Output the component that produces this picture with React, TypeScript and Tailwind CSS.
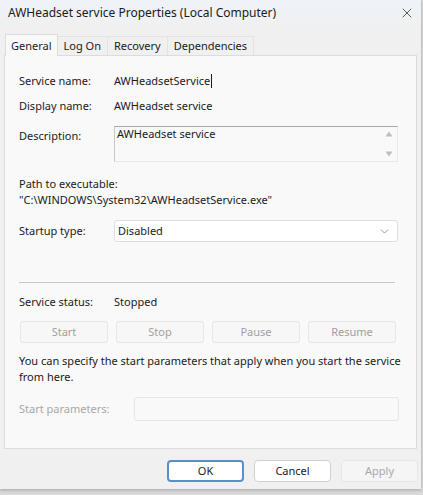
import React from 'react';
import { X, ChevronDown } from 'lucide-react';

const font = { fontFamily: '"Noto Sans", "Open Sans", sans-serif' };

function Label({ children }: { children: React.ReactNode }) {
  return <div className="w-[95px] shrink-0 text-[#1a1a1a]">{children}</div>;
}

function SvcButton({ label }: { label: string }) {
  return (
    <div className="flex h-[22px] w-[88px] items-center justify-center rounded-[3px] border border-[#e6e6e6] bg-[#f7f7f7] text-[#a0a0a0]">
      {label}
    </div>
  );
}

export default function App() {
  const tabs = ['Log On', 'Recovery', 'Dependencies'];

  return (
    <div className="h-[495px] w-[423px] bg-[#d9d9d9] text-[11px] leading-[14px] text-[#1a1a1a]" style={font}>
      <div className="flex h-[489px] w-[421px] flex-col bg-[#f0f0f0] shadow-[0_1px_3px_rgba(0,0,0,0.25)]">
        {/* title bar */}
        <div className="flex h-[25px] items-center justify-between bg-gradient-to-b from-[#eef3f9] to-[#f0f0f0] pl-2 pr-[6px]">
          <span className="text-[12px] text-[#1a1a1a]">AWHeadset service Properties (Local Computer)</span>
          <X size={16} strokeWidth={1.2} className="text-[#333]" />
        </div>

        {/* tabs */}
        <div className="mt-[9px] flex items-end pl-[5px]">
          <div className="relative z-10 -mb-px flex h-[22px] items-center border border-b-0 border-[#dcdcdc] bg-[#f9f9f9] px-[5px]">
            General
          </div>
          {tabs.map((t) => (
            <div key={t} className="flex h-[19px] items-center border-r border-t border-[#e3e3e3] bg-[#f0f0f0] px-[6px]">
              {t}
            </div>
          ))}
        </div>

        {/* panel */}
        <div className="mx-[4px] flex h-[394px] flex-col border border-[#dcdcdc] bg-[#f9f9f9] px-[14px]">
          <div className="mt-[18px] flex h-[14px] items-center">
            <Label>Service name:</Label>
            <span>AWHeadsetService</span>
            <span className="ml-px h-[14px] w-px bg-[#1a1a1a]" />
          </div>
          <div className="mt-[11px] flex h-[14px] items-center">
            <Label>Display name:</Label>
            <span>AWHeadset service</span>
          </div>
          <div className="mt-[13px] flex items-start">
            <Label>
              <div className="pt-[3px]">Description:</div>
            </Label>
            <div className="flex h-[36px] w-[284px] border border-t-[#a8a8a8] border-l-[#c8c8c8] border-b-[#e8e8e8] border-r-[#e8e8e8] bg-[#f9f9f9]">
              <div className="flex-1 pl-[2px]">AWHeadset service</div>
              <div className="flex w-[16px] flex-col items-center justify-between py-[4px] text-[#bdbdbd]">
                <svg width="8" height="6" viewBox="0 0 8 6"><path d="M4 0.5L7.5 5.5H0.5Z" fill="currentColor" /></svg>
                <svg width="8" height="6" viewBox="0 0 8 6"><path d="M4 5.5L7.5 0.5H0.5Z" fill="currentColor" /></svg>
              </div>
            </div>
          </div>

          <div className="mt-[15px] h-[14px]">Path to executable:</div>
          <div className="mt-[2px] h-[14px]">"C:\WINDOWS\System32\AWHeadsetService.exe"</div>

          <div className="mt-[13px] flex items-center">
            <Label>Startup type:</Label>
            <div className="flex h-[22px] w-[284px] items-center justify-between rounded-[3px] border border-[#dedede] bg-white pl-[3px] pr-[6px]">
              <span>Disabled</span>
              <ChevronDown size={13} strokeWidth={1.2} className="text-[#666]" />
            </div>
          </div>

          <div className="mt-[40px] h-px w-[376px] bg-[#c8c8c8]" />

          <div className="mt-[12px] flex h-[14px] items-center">
            <Label>Service status:</Label>
            <span>Stopped</span>
          </div>

          <div className="mt-[12px] flex gap-[8px] pl-px">
            <SvcButton label="Start" />
            <SvcButton label="Stop" />
            <SvcButton label="Pause" />
            <SvcButton label="Resume" />
          </div>

          <div className="mt-[10px] leading-[16px]">
            You can specify the start parameters that apply when you start the service from here.
          </div>

          <div className="mt-[12px] flex items-center">
            <div className="w-[115px] shrink-0 text-[#a8a8a8]">Start parameters:</div>
            <div className="h-[24px] w-[265px] rounded-[3px] border border-[#e6e6e6] bg-[#f9f9f9]" />
          </div>
        </div>

        {/* footer buttons */}
        <div className="mt-[11px] flex justify-end gap-[10px] pr-[3px]">
          <div className="flex h-[22px] w-[77px] items-center justify-center rounded-[4px] border-2 border-[#5a8fc9] bg-white">
            OK
          </div>
          <div className="flex h-[22px] w-[77px] items-center justify-center rounded-[4px] border border-[#d0d0d0] bg-white">
            Cancel
          </div>
          <div className="flex h-[22px] w-[77px] items-center justify-center rounded-[4px] border border-[#e6e6e6] bg-[#f5f5f5] text-[#a8a8a8]">
            Apply
          </div>
        </div>
      </div>
    </div>
  );
}
